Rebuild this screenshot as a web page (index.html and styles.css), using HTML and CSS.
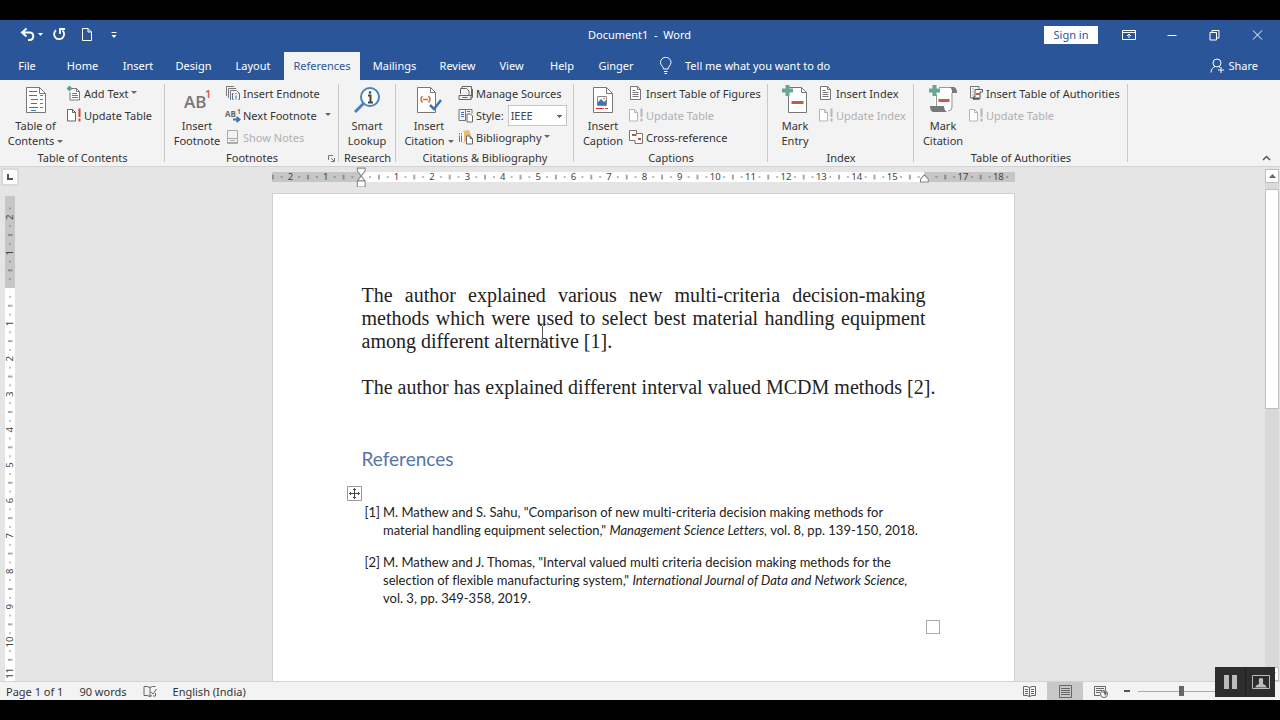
FILE: index.html
```html
<!DOCTYPE html>
<html lang="en">
<head>
<meta charset="utf-8">
<title>Document1 - Word</title>
<link rel="stylesheet" href="styles.css">
</head>
<body>
<svg class="defs" aria-hidden="true">
  <defs>
    <symbol id="update" viewBox="0 0 16 16"><path d="M1.500 2.500h5l3 3v8.500h-8z" fill="#fff" stroke="currentColor"/><path d="M6.500 2.500v3h3" fill="none" stroke="currentColor"/><path class="bang" d="M13.500 1.500v8.500M13.500 11.500v3" fill="none" stroke-width="2"/></symbol>
    <symbol id="lines" viewBox="0 0 16 16"><path d="M2.500 1.500h7l3 3v10h-10z" fill="#fff" stroke="#777"/><path d="M9.500 1.500v3h3M4.500 5.500h3M4.500 7.500h6M4.500 9.500h6M4.500 11.500h6" fill="none" stroke="#777"/></symbol>
  </defs>
</svg>
<div class="app">
  <header class="titlebar">
    <div class="quick">
      <button class="undo" aria-label="Undo"><svg width="24" height="16" viewBox="0 0 24 16"><path d="M2 5.500h7.500c5 0 5 7.500 0 7.500H8M6.500 1.500l-4.500 4 4.500 4" fill="none" stroke="#fff" stroke-width="2"/><path d="M18 6h5l-2.500 3z" fill="#fff"/></svg></button>
      <button class="redo" aria-label="Repeat"><svg width="15" height="15" viewBox="0 0 15 15"><path d="M4 3.300a5 5 0 1 0 6.500 .2M8 7V2h5" fill="none" stroke="#fff" stroke-width="1.800"/></svg></button>
      <button class="new" aria-label="New"><svg width="12" height="15" viewBox="0 0 12 15"><path d="M1.500 1.500h5.500l3.500 3.500v8.500h-9zM7 1.500v3.500h3.500" fill="none" stroke="#fff"/></svg></button>
      <button class="custom" aria-label="Customize toolbar"><svg width="8" height="8" viewBox="0 0 8 8"><path d="M1.500 1.500h5" stroke="#fff"/><path d="M1.500 4h5L4 7z" fill="#fff"/></svg></button>
    </div>
    <h1 class="title">Document1&nbsp; -&nbsp; Word</h1>
    <div class="window-tools">
      <button class="signin">Sign in</button>
      <button aria-label="Ribbon display options"><svg width="14" height="12" viewBox="0 0 14 12"><path d="M.5 1.500h13v9H.5zM.5 3.500h13M7 9V5M5 7l2-2 2 2" fill="none" stroke="#fff"/></svg></button>
      <button aria-label="Minimize"><svg width="10" height="12" viewBox="0 0 10 12"><path d="M.5 6.500h9" stroke="#fff"/></svg></button>
      <button aria-label="Restore"><svg width="11" height="12" viewBox="0 0 11 12"><path d="M1 3.500h6.500V11H1zM3 3.500v-2h7V9H7.500" fill="none" stroke="#fff"/></svg></button>
      <button aria-label="Close"><svg width="11" height="12" viewBox="0 0 11 12"><path d="M1 1.500l9 9M10 1.500l-9 9" stroke="#fff" fill="none"/></svg></button>
    </div>
  </header>

  <nav class="tabs" aria-label="Ribbon tabs">
    <button>File</button><button>Home</button><button>Insert</button><button>Design</button><button>Layout</button><button class="active">References</button><button>Mailings</button><button>Review</button><button>View</button><button>Help</button><button>Ginger</button>
    <button class="tell"><svg width="14" height="18" viewBox="0 0 14 18"><path d="M4.500 12c0-2.500-3-3.500-3-6.500a5 5 0 0 1 10.500 0c0 3-3 4-3 6.500zM5 14.500h3.500M5.500 16.500H8" fill="none" stroke="#fff"/></svg>Tell me what you want to do</button>
    <button class="share"><svg width="15" height="15" viewBox="0 0 15 15"><circle cx="7" cy="5" r="4" fill="none" stroke="#fff"/><path d="M1 14.500C1 11 3 9.500 5 8.500M8.500 8.500l1.500 1M11 9v6M8 12h6" fill="none" stroke="#fff"/></svg>Share</button>
  </nav>

  <section class="ribbon" aria-label="References">
    <div class="group">
      <div class="tools">
        <button class="big b-toc"><svg width="22" height="30" viewBox="0 0 22 30"><path d="M1.500 2.500h13l6 6v19h-19z" fill="#fff" stroke="#777"/><path d="M14.500 2.500v6h6" fill="none" stroke="#777"/><path d="M4 6.500h8M4 10.500h8M6 14.500h7M6 18.500h6M4 22.500h9M6 25.500h5" stroke="#3d74b5" fill="none"/><path d="M15 10.500h3M15 14.500h3M15 18.500h3M15 22.500h3" stroke="#777"/></svg><span>Table of<br>Contents<i class="caret"></i></span></button>
        <div class="smalls">
          <button><svg width="16" height="16" viewBox="0 0 16 16"><path d="M5 3.500h5.500l3 3V15H4V7" fill="#fff" stroke="#777"/><path d="M10.500 3.500v3h3M6 8.500h5M6 10.500h6M6 12.500h6" fill="none" stroke="#777"/><path d="M3.500 1v5M1 3.500h5" stroke="#4f9d78" stroke-width="2"/></svg>Add Text<i class="caret"></i></button>
          <button><svg width="16" height="16" class="red"><use href="#update"/></svg>Update Table</button>
        </div>
      </div>
      <h2>Table of Contents</h2>
    </div>

    <div class="group">
      <div class="tools">
        <button class="big b-foot"><svg width="28" height="30" viewBox="0 0 28 30"><text x="1" y="23" class="ab">AB</text><text x="22" y="13" class="one">1</text></svg><span>Insert<br>Footnote</span></button>
        <div class="smalls">
          <button><svg width="16" height="16" viewBox="0 0 16 16"><path d="M1.500 11V1.500H9M3.500 13V3.500H11M5.500 15V5.500h6l3 3" fill="none" stroke="#777"/><path d="M8.500 8.500h-1v6h1M13.500 8.500h1v6h-1" stroke="#3d74b5" fill="none"/><path d="M11 10.500v4M11 8v1" stroke="#3d74b5"/></svg>Insert Endnote</button>
          <button><svg width="16" height="16" viewBox="0 0 16 16"><text x="0" y="10" class="ab-small">AB</text><text x="12" y="7" class="one-small">1</text><path d="M8 12.500h6M11.500 10l3 2.500-3 2.500" fill="none" stroke="#3d74b5" stroke-width="2"/></svg>Next Footnote<i class="caret far"></i></button>
          <button disabled><svg width="16" height="16" viewBox="0 0 16 16"><path d="M2.500 1.500h10v13h-10zM2.500 9.500h10M5 11.500h5M3 13.500h9" fill="none" stroke="#aaa"/></svg>Show Notes</button>
        </div>
      </div>
      <h2>Footnotes</h2>
      <button class="launcher" aria-label="Footnote options"><svg width="7" height="7" viewBox="0 0 7 7"><path d="M.5 5V.5H5M3 3l3 3M6.500 3v3.500H3" fill="none" stroke="#777"/></svg></button>
    </div>

    <div class="group">
      <div class="tools">
        <button class="big b-smart"><svg width="28" height="30" viewBox="0 0 28 30"><circle cx="17" cy="12" r="9" fill="#fff" stroke="#4a82bd" stroke-width="2"/><path d="M10.500 18.500L2 27" stroke="#4a82bd" stroke-width="3"/><path d="M15 10.500h2.500V17M15 17.500h5" stroke="#444" stroke-width="2" fill="none"/><circle cx="17" cy="7.500" r="1.300" fill="#444"/></svg><span>Smart<br>Lookup</span></button>
      </div>
      <h2>Research</h2>
    </div>

    <div class="group">
      <div class="tools">
        <button class="big b-cite"><svg width="28" height="30" viewBox="0 0 28 30"><path d="M2.500 2.500h13l5 5v20h-18z" fill="#fff" stroke="#777"/><path d="M15.500 2.500v5h5" fill="none" stroke="#777"/><path d="M7.500 11q-3 3 0 6.500M13.500 11q3 3 0 6.500M8 14.500h5" stroke="#d06a43" fill="none" stroke-width="1.500"/><path d="M15 20l4 4 7-9" fill="none" stroke="#3d74b5" stroke-width="2.500"/></svg><span>Insert<br>Citation<i class="caret"></i></span></button>
        <div class="smalls">
          <button><svg width="16" height="16" viewBox="0 0 16 16"><path d="M4 4V1.500h9.500V11M2.500 9V3.500h6l2.500 2.500V10M1 10.500h12v4H1zM4.500 12.500h5" fill="none" stroke="#666"/><path d="M14.500 4v8l-2 2.500" fill="none" stroke="#666"/></svg>Manage Sources</button>
          <div class="style-row"><svg width="16" height="16" viewBox="0 0 16 16"><path d="M1 2.500h13v4M1 2.500v11h7M7.500 2.500v11" fill="none" stroke="#777"/><path d="M3 5.500h3M3 7.500h3M3 9.500h3M9 4.500h3" stroke="#3d74b5"/><path d="M9 7h3.500l2 2v6H9z" fill="#fff" stroke="#666"/></svg><label for="style">Style:</label><select id="style"><option>IEEE</option></select></div>
          <button><svg width="16" height="16" viewBox="0 0 16 16"><path d="M1 4h3v9H1z" fill="#777"/><path d="M5 2l6-1 2 5-7 8H5z" fill="#e6bd79"/><path d="M2.500 3v10M5.500 3v10M1 6h5" stroke="#fff" fill="none"/><path d="M8.500 7H12l2.500 2.500V15h-6zM12 7v2.500h2.500" fill="#fff" stroke="#666"/></svg>Bibliography<i class="caret"></i></button>
        </div>
      </div>
      <h2>Citations &amp; Bibliography</h2>
    </div>

    <div class="group">
      <div class="tools">
        <button class="big b-caption"><svg width="22" height="30" viewBox="0 0 22 30"><path d="M1.500 2.500h13l6 6v19h-19z" fill="#fff" stroke="#777"/><path d="M14.500 2.500v6h6" fill="none" stroke="#777"/><path d="M5.500 11.500h9v9h-9z" fill="none" stroke="#888"/><path d="M6 20v-3l3-3 3 3 2-2v5z" fill="#3d74b5"/><circle cx="12" cy="13.500" r="1" fill="#e4a14c"/><path d="M4 23.500h8M13 23.500h3" stroke="#d33"/></svg><span>Insert<br>Caption</span></button>
        <div class="smalls">
          <button><svg width="16" height="16"><use href="#lines"/></svg>Insert Table of Figures</button>
          <button disabled><svg width="16" height="16" class="grey"><use href="#update"/></svg>Update Table</button>
          <button><svg width="16" height="16" viewBox="0 0 16 16"><path d="M1.500 1.500h7v10h-7z" fill="#fff" stroke="#777"/><path d="M9 4.500h5.500v10H7v-3" fill="#fff" stroke="#777"/><path d="M4 6h4M10 10h3" stroke="#c74c32" stroke-width="2"/></svg>Cross-reference</button>
        </div>
      </div>
      <h2>Captions</h2>
    </div>

    <div class="group">
      <div class="tools">
        <button class="big b-entry"><svg width="28" height="32" viewBox="0 0 28 32"><path d="M7.500 4.500h13l5 5v20h-18z" fill="#fff" stroke="#777"/><path d="M20.500 4.500v5h5" fill="none" stroke="#777"/><path d="M6.500 2v11M1 7.500h11" stroke="#6aa58d" stroke-width="4"/><path d="M10.500 19.500h12" stroke="#c75b45" stroke-width="3"/></svg><span>Mark<br>Entry</span></button>
        <div class="smalls">
          <button><svg width="16" height="16"><use href="#lines"/></svg>Insert Index</button>
          <button disabled><svg width="16" height="16" class="grey"><use href="#update"/></svg>Update Index</button>
        </div>
      </div>
      <h2>Index</h2>
    </div>

    <div class="group">
      <div class="tools">
        <button class="big b-auth"><svg width="30" height="32" viewBox="0 0 30 32"><path d="M7 4.500h19q-3 1-3 5v15q0 4-4 4H8q3 0 3-5H7z" fill="#fff"/><path d="M8.500 12v11M11 4.500h12M24 10v14q0 4-4 4" fill="none" stroke="#999"/><path d="M22 4h4q3 1 3 6h-5V7z" fill="#777"/><path d="M2 23h14q0 4 3 6H5q-3-1-3-6z" fill="#777"/><path d="M6.500 2v11M1 7.500h11" stroke="#6aa58d" stroke-width="4"/><path d="M10.500 17.500h11" stroke="#c75b45" stroke-width="3"/></svg><span>Mark<br>Citation</span></button>
        <div class="smalls">
          <button><svg width="16" height="16" viewBox="0 0 16 16"><path d="M5 13H2.500V1.500H11V4M4.500 4h1M4.500 7h1M4.500 10h1" fill="none" stroke="#777"/><path d="M7 12V4.500h7.500V7H12v7H5v-2z" fill="#fff" stroke="#555"/><path d="M5 12.500h6v2H5z" fill="#555"/><path d="M8 9h4" stroke="#c75b45" stroke-width="2"/></svg>Insert Table of Authorities</button>
          <button disabled><svg width="16" height="16" class="grey"><use href="#update"/></svg>Update Table</button>
        </div>
      </div>
      <h2>Table of Authorities</h2>
    </div>
    <button class="collapse" aria-label="Collapse the ribbon"><svg width="9" height="6" viewBox="0 0 9 6"><path d="M1 5l3.500-3.500L8 5" fill="none" stroke="#555" stroke-width="1.500"/></svg></button>
  </section>

  <main class="workspace">
    <div class="left-rail">
      <button class="tabstop" aria-label="Tab stop"><svg width="6" height="6" viewBox="0 0 6 6"><path d="M1 0v5h5" fill="none" stroke="#555" stroke-width="2"/></svg></button>
      <div class="vruler">
        <svg width="10" height="485" viewBox="-14 -260 28 1370" preserveAspectRatio="none">
          <defs><pattern id="vt" x="-14" y="0" width="28" height="100" patternUnits="userSpaceOnUse"><path d="M12 25h4M12 75h4M8 50h13" stroke="#555" stroke-width="3"/></pattern></defs>
          <path d="M-14-260h28V0h-28z" fill="#c6c6c6"/><path d="M-14 0h28v1110h-28z" fill="#fff"/><path d="M-14-240h28v1300h-28z" fill="url(#vt)"/>
          <g class="nums"><text transform="translate(9 -200) rotate(-90)">2</text><text transform="translate(9 -100) rotate(-90)">1</text><text transform="translate(9 100) rotate(-90)">1</text><text transform="translate(9 200) rotate(-90)">2</text><text transform="translate(9 300) rotate(-90)">3</text><text transform="translate(9 400) rotate(-90)">4</text><text transform="translate(9 500) rotate(-90)">5</text><text transform="translate(9 600) rotate(-90)">6</text><text transform="translate(9 700) rotate(-90)">7</text><text transform="translate(9 800) rotate(-90)">8</text><text transform="translate(9 900) rotate(-90)">9</text><text transform="translate(9 1000) rotate(-90)">10</text><text transform="translate(9 1088) rotate(-90)">11</text></g>
        </svg>
      </div>
    </div>
    <div class="canvas">
      <div class="hruler">
        <svg width="743" height="20" viewBox="-252 -28 2099 56">
          <defs><pattern id="ht" x="0" y="-14" width="100" height="28" patternUnits="userSpaceOnUse"><path d="M25 12v4M75 12v4M50 8v13" stroke="#555" stroke-width="3"/></pattern></defs>
          <path d="M-252-14h2099v28H-252z" fill="#c6c6c6"/><path d="M0-14h1591v28H0z" fill="#fff"/><path d="M-252-14h2099v28H-252z" fill="url(#ht)"/>
          <g class="nums"><text x="-200" y="9">2</text><text x="-100" y="9">1</text><text x="100" y="9">1</text><text x="200" y="9">2</text><text x="300" y="9">3</text><text x="400" y="9">4</text><text x="500" y="9">5</text><text x="600" y="9">6</text><text x="700" y="9">7</text><text x="800" y="9">8</text><text x="900" y="9">9</text><text x="1000" y="9">10</text><text x="1100" y="9">11</text><text x="1200" y="9">12</text><text x="1300" y="9">13</text><text x="1400" y="9">14</text><text x="1500" y="9">15</text><text x="1700" y="9">17</text><text x="1800" y="9">18</text></g>
          <path d="M-11-25h22v8L0-3l-11-14zM-11 11L0-3l11 14v17h-22zM-11 11h22M1580 14V6l11-12 11 12v8z" fill="#fff" stroke="#888" stroke-width="3"/>
        </svg>
      </div>
      <article class="page">
        <div class="body-text">
          <p>The author explained various new multi-criteria decision-making methods which were used to select best material handling equipment among different alternative [1].</p>
          <p class="single">The author has explained different interval valued MCDM methods [2].</p>
          <svg class="ibeam" width="7" height="17" viewBox="0 0 7 17"><path d="M1 .5h2M4 .5h2M3.500 1v15M1 16.500h2M4 16.500h2" stroke="#555" fill="none"/></svg>
        </div>
        <h2 class="ref-title">References</h2>
        <div class="bibliography">
          <svg class="move" width="15" height="15" viewBox="0 0 15 15"><path d="M.5.500h14v14H.5z" fill="#fff" stroke="#999"/><path d="M7.500 2.500v10M2.500 7.500h10M6 4l1.500-1.500L9 4M6 11l1.500 1.500L9 11M4 6L2.500 7.500 4 9M11 6l1.500 1.500L11 9" fill="none" stroke="#444"/></svg>
          <table>
            <tr><td>[1]</td><td>M. Mathew and S. Sahu, "Comparison of new multi-criteria decision making methods for<br>material handling equipment selection," <em>Management Science Letters,</em> vol. 8, pp. 139-150, 2018.</td></tr>
            <tr><td>[2]</td><td>M. Mathew and J. Thomas, "Interval valued multi criteria decision making methods for the<br>selection of flexible manufacturing system," <em>International Journal of Data and Network Science,</em><br>vol. 3, pp. 349-358, 2019.</td></tr>
          </table>
          <span class="handle"></span>
        </div>
      </article>
    </div>
    <div class="scrollbar">
      <button class="arrow" aria-label="Scroll up"><svg width="7" height="4" viewBox="0 0 7 4"><path d="M0 4l3.500-4L7 4z" fill="#666"/></svg></button>
      <div class="track"><div class="thumb"></div></div>
      <button class="arrow" aria-label="Scroll down"><svg width="7" height="4" viewBox="0 0 7 4"><path d="M0 0l3.500 4L7 0z" fill="#666"/></svg></button>
    </div>
  </main>

  <footer class="status">
    <span>Page 1 of 1</span><span>90 words</span>
    <svg width="14" height="13" viewBox="0 0 14 13"><path d="M7 2.500Q4 1 1 1.500v9q3-.5 6 1V2.500Q9 1 12.500 1.500M7 11.500l2-1M12.500 8v3H10M8 7l2 2 3.500-5" fill="none" stroke="#666"/></svg>
    <span>English (India)</span>
    <div class="views">
      <button aria-label="Read mode"><svg width="13" height="13" viewBox="0 0 13 13"><path d="M6.500 2.500L4 1.500H.5v9H4l2.500 1 2.500-1h3.500v-9H9zV12M2 4.500h3M2 6.500h3M2 8.500h3M8 4.500h3M8 6.500h3M8 8.500h3" fill="none" stroke="#666"/></svg></button>
      <button class="on" aria-label="Print layout"><svg width="13" height="13" viewBox="0 0 13 13"><path d="M.5.500h12v12H.5zM2 3.500h9M2 5.500h9M2 7.500h9M2 9.500h9" fill="none" stroke="#666"/></svg></button>
      <button aria-label="Web layout"><svg width="14" height="13" viewBox="0 0 14 13"><path d="M11.500 5V1.500H.5v9H6M2 3.500h8M2 5.500h6M2 7.500h4" fill="none" stroke="#666"/><circle cx="10" cy="9" r="3.500" fill="#fff" stroke="#666"/><path d="M8 7l2 1 1 3 2-3-2-2z" fill="#666"/></svg></button>
      <button class="minus" aria-label="Zoom out"><svg width="6" height="2"><path d="M0 1h6" stroke="#555" stroke-width="2"/></svg></button>
      <input type="range" class="zoom" aria-label="Zoom" min="0" max="100" value="50">
    </div>
  </footer>
</div>
<div class="recorder">
  <button aria-label="Pause"><svg width="13" height="14" viewBox="0 0 13 14"><path d="M0 0h5v14H0zM8 0h5v14H8z" fill="#bbb"/></svg></button>
  <button aria-label="Camera"><svg width="18" height="14" viewBox="0 0 18 14"><path d="M.5.500h17v13H.5z" fill="none" stroke="#bbb"/><path d="M3 12.500q1-3 4-3.500V7q-1-4 2-4t2 4v2q3 .5 4 3.500z" fill="#bbb"/></svg></button>
</div>
</body>
</html>
```

FILE: styles.css
```css
* { box-sizing: border-box; }
body {
  margin: 0;
  height: 100vh;
  padding: 20px 0;
  background: #000;
  font: 11px/15px "Noto Sans", "Open Sans", sans-serif;
  color: #333;
  overflow: hidden;
}
button {
  border: 0;
  padding: 0;
  margin: 0;
  background: none;
  color: inherit;
  font: inherit;
  white-space: nowrap;
}
svg { display: block; flex: none; }
h1, h2, p { margin: 0; font: inherit; }
.defs { position: absolute; width: 0; height: 0; }
.app { height: 100%; display: flex; flex-direction: column; background: #e5e5e5; }

.titlebar {
  height: 32px;
  flex: none;
  display: grid;
  grid-template-columns: 1fr auto 1fr;
  align-items: center;
  padding: 0 1px 3px 0;
  background: #2a5699;
  color: #fff;
}
.quick { display: flex; align-items: center; padding-left: 20px; }
.redo { margin-left: 8px; }
.new { margin-left: 14px; }
.custom { margin-left: 17px; }
.window-tools { display: flex; justify-content: flex-end; align-items: center; }
.window-tools button { width: 43px; display: grid; place-items: center; }
.window-tools .signin {
  width: 54px;
  height: 18px;
  margin-right: 9px;
  background: #fff;
  color: #2a5699;
}

.tabs {
  height: 28px;
  flex: none;
  display: grid;
  grid-template-columns: 54px 57px 54px 57px 62px 76px 69px 57px 51px 50px 58px auto 1fr;
  background: #2a5699;
  color: #fff;
}
.tabs button { padding-bottom: 1px; }
.tabs .active { background: #f3f3f3; color: #2a5699; }
.tabs .tell { display: flex; align-items: center; gap: 12px; padding-left: 14px; }
.tabs .share { display: flex; align-items: center; justify-content: flex-end; gap: 3px; padding-right: 22px; }

.ribbon {
  height: 87px;
  flex: none;
  display: grid;
  grid-template-columns: 165px 174px 57px 178px 194px 146px 214px 1fr;
  background: #f3f3f3;
  border-bottom: 1px solid #d2d2d2;
}
.group { position: relative; display: flex; flex-direction: column; }
.group::after {
  content: "";
  position: absolute;
  top: 4px;
  right: 0;
  bottom: 4px;
  width: 1px;
  background: #c8c8c8;
}
.group h2 { text-align: center; }
.tools { display: flex; height: 70px; }
.big {
  width: 56px;
  flex: none;
  display: flex;
  flex-direction: column;
  align-items: center;
  justify-content: flex-end;
  padding-bottom: 2px;
}
.b-toc { width: 66px; padding-left: 5px; }
.b-foot { width: 60px; padding-left: 4px; }
.b-cite { width: 62px; padding-left: 4px; }
.b-caption { width: 54px; padding-left: 4px; }
.b-entry { width: 50px; padding-left: 4px; }
.b-auth { width: 54px; padding-left: 4px; }
.big span { margin-top: 3px; }
.smalls { display: flex; flex-direction: column; padding-top: 2px; }
.smalls > * { height: 22px; display: flex; align-items: center; gap: 2px; }
.smalls button:disabled { color: #b0b0b0; }
.caret {
  display: inline-block;
  border: 3px solid transparent;
  border-top-color: #666;
  border-bottom: 0;
  margin: 0 0 2px 3px;
}
.smalls .caret { margin-left: 0; }
.smalls .caret.far { margin-left: 6px; }
.red, .grey { --bang: #d8452f; }
.red { color: #666; }
.grey { color: #b5b5b5; --bang: #b5b5b5; }
.bang { stroke: var(--bang); }
.ab { font: 600 17px "Open Sans", sans-serif; fill: #777; }
.one { font: 600 11px "Open Sans", sans-serif; fill: #d8512f; }
.ab-small { font: 700 8px "Open Sans", sans-serif; fill: #666; }
.one-small { font: 700 7px "Open Sans", sans-serif; fill: #d8512f; }
.style-row select {
  width: 59px;
  height: 21px;
  margin-left: 2px;
  padding: 0 2px;
  border: 1px solid #c6c6c6;
  border-radius: 0;
  appearance: none;
  font: inherit;
  color: #444;
  background: linear-gradient(#666, #666) 48px 9px / 5px 1px no-repeat, linear-gradient(#666, #666) 49px 10px / 3px 1px no-repeat, linear-gradient(#666, #666) 50px 11px / 1px 1px no-repeat, #fff;
}
.launcher { position: absolute; right: 4px; bottom: 4px; }
.collapse { justify-self: end; align-self: end; padding: 0 9px 5px 0; }

.workspace { flex: 1; min-height: 0; display: flex; }
.left-rail { width: 21px; flex: none; display: flex; flex-direction: column; }
.tabstop {
  width: 18px;
  height: 18px;
  margin: 1px 0 10px 1px;
  display: grid;
  place-items: center;
  background: #fff;
  border: 2px solid #dadada;
  flex: none;
}
.vruler { flex: 1; min-height: 0; padding-left: 5px; }
.vruler svg { overflow: visible; }
.nums { font: 27px "Noto Sans", sans-serif; fill: #444; text-anchor: middle; }
.canvas { flex: 1; display: flex; flex-direction: column; align-items: center; min-width: 0; overflow: hidden; }
.hruler { padding-bottom: 6px; }
.page {
  width: 743px;
  flex: 1;
  background: #fff;
  border: 1px solid #d0d0d0;
  border-bottom: 0;
  padding: 90px 88px 0 89px;
  color: #222;
}
.body-text { position: relative; font: 20px/23px "Liberation Serif", serif; text-align: justify; }
.body-text p + p { margin-top: 23px; }
.single { white-space: nowrap; }
.ibeam { position: absolute; left: 177px; top: 41px; }
.ref-title { margin-top: 47px; font: 19px/26px Lato, sans-serif; color: #5874a8; }
.bibliography { position: relative; padding-top: 31px; }
.bibliography table {
  border-collapse: collapse;
  font: 13px/18px Lato, sans-serif;
  font-variant-ligatures: none;
  white-space: nowrap;
}
.bibliography td { padding: 0 0 14px 3px; vertical-align: top; }
.move { position: absolute; left: -15px; top: 14px; }
.handle { position: absolute; right: -14px; bottom: -13px; width: 14px; height: 14px; border: 1px solid #aaa; }

.scrollbar { width: 15px; flex: none; display: flex; flex-direction: column; padding: 2px 1px 0 0; }
.arrow { height: 14px; flex: none; display: grid; place-items: center; background: #fff; border: 1px solid #c0c0c0; }
.track { flex: 1; background: #d9d9d9; padding-top: 6px; }
.thumb { height: 46%; background: #fff; border: 1px solid #c0c0c0; }

.status {
  height: 19px;
  flex: none;
  display: flex;
  align-items: center;
  gap: 16px;
  padding-left: 6px;
  background: #f3f3f3;
  border-top: 1px solid #d2d2d2;
}
.views { margin-left: auto; display: flex; align-items: center; align-self: stretch; }
.views button { width: 36px; height: 100%; display: grid; place-items: center; }
.views .on { background: #c8c8c8; }
.views .minus { width: 16px; }
.zoom { appearance: none; width: 86px; height: 1px; margin: 0 56px 0 3px; background: #aaa; }
.zoom::-webkit-slider-thumb { appearance: none; width: 5px; height: 10px; background: #666; }

.recorder {
  position: absolute;
  right: 5px;
  bottom: 23px;
  width: 60px;
  height: 30px;
  display: grid;
  grid-template-columns: 1fr 1fr;
  background: #2d2d2d;
}
.recorder button { display: grid; place-items: center; }
.recorder button + button { border-left: 1px solid #202020; }
```
